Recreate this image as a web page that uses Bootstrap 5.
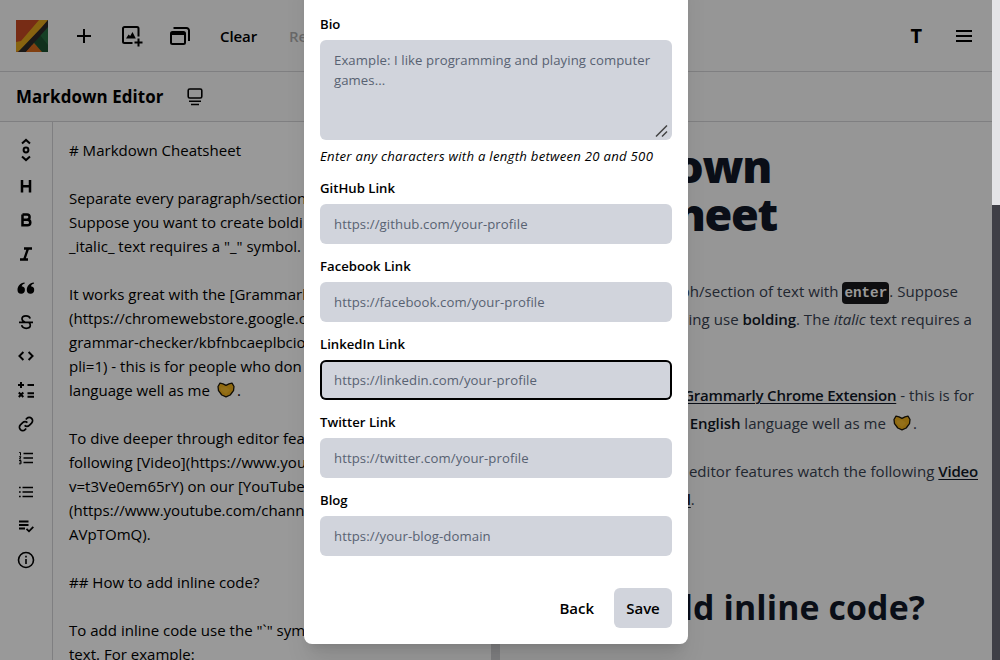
<!DOCTYPE html>
<html lang="en">
<head>
<meta charset="utf-8">
<meta name="viewport" content="width=device-width, initial-scale=1">
<title>Markdown Editor</title>
<link href="https://cdn.jsdelivr.net/npm/bootstrap@5.3.0/dist/css/bootstrap.min.css" rel="stylesheet">
<style>
  body{font-family:"Open Sans","Noto Sans",sans-serif;font-size:15.04px;line-height:24px;color:#000;background:#3f3f46;height:660px}
  svg{display:block;flex:none}
  .line-i{fill:none;stroke:#000;stroke-width:2}
  .app{width:992px;height:660px;background:#fafafa}
  .page-thumb{width:8px;height:205px;background:#e4e4e7}
  .top-bar{height:72px;border-bottom:1px solid #d4d4d8;padding:0 20px 0 16px}
  .sub-bar{height:50px;border-bottom:1px solid #d4d4d8;padding:0 16px}
  .doc-title{font-weight:700;font-size:16.92px;letter-spacing:.08px}
  .tool{font-weight:600;letter-spacing:-.1px}
  .faded{opacity:.3}
  .typo{font-weight:700;font-size:20px}
  .pane-l{width:500px;border-right:1px solid #d4d4d8;background:#fff}
  .side{width:53px;border-right:1px solid #d4d4d8;padding-top:11px}
  .side svg{margin-bottom:14px}
  .side svg:first-child{margin:5px 0 14px}
  .src{padding:16px;white-space:pre;line-height:24px}
  .src-bar{width:8px;background:#d4d4d8}
  .pair{display:inline-block;vertical-align:-2px;margin:0 2px 0 3px}
  .view{padding:20px 14px 0 16px;color:#374151;letter-spacing:.04px}
  .view div{text-align:right;white-space:nowrap;line-height:28px}
  .view b,.view a{font-weight:600;color:#111827;letter-spacing:-.12px}
  .view a{text-decoration:underline;text-underline-offset:2px;text-decoration-thickness:1px;letter-spacing:-.22px}
  .view .big{font-weight:800;font-size:45px;line-height:48px;letter-spacing:-1.3px;color:#111827}
  .view .mid{font-weight:700;font-size:33.84px;line-height:40px;letter-spacing:.12px;color:#111827;margin-top:74px}
  .w1{width:255px}.w2{width:261px}.w3{width:442px}.w4{width:456px}.w5{width:458px}.w6{width:401px}.w7{width:462px}.w8{width:177px}.w9{width:409px}.w10{width:160px}
  .key{font:700 14.3px/22px "Liberation Mono",monospace;background:#18181b;color:#fff;border-radius:4px;padding:0 2px;display:inline-block;letter-spacing:0}
  .shade{background:rgba(0,0,0,.4)}
  .sheet{left:304px;top:-40px;width:384px;height:684px;background:#fff;border-radius:8px;padding:52px 16px 16px;box-shadow:0 20px 25px -5px rgba(0,0,0,.1),0 8px 10px -6px rgba(0,0,0,.1)}
  .sheet label{font-weight:600;font-size:13.16px;line-height:24px;height:28px;display:block}
  .sheet .form-control{background:#d1d4dc;border:0;border-radius:6px;height:40px;padding:8px 14px;font-size:13.16px;line-height:20px;letter-spacing:.09px}
  .sheet .form-control::placeholder{color:#586272;opacity:1}
  .sheet textarea.form-control{height:100px;padding-top:10px;resize:none;letter-spacing:.08px}
  .sheet .active-field{box-shadow:inset 0 0 0 2px #000}
  .hint{font-size:13.16px;font-style:italic;letter-spacing:.26px;line-height:20px;margin:6px 0 10px;white-space:nowrap}
  .field{margin-bottom:10px}
  .grip{right:4px;bottom:3px}
  .sheet .btn{height:40px;padding:0 12px;font-weight:600;font-size:15.04px;border:0;border-radius:6px;letter-spacing:-.05px;color:#000}
  .sheet .btn-save{background:#d1d4dc;width:58px}
</style>
</head>
<body class="position-relative overflow-hidden">
<svg width="0" height="0" class="position-absolute"><defs>
  <g id="heart"><path d="M1 4.500 3 1.200l3 .6L9 3.300l3-1.500 3-.6 2 3.300-.5 4.200-3.300 4.300L9 14.800 4.800 13 1.500 8.700Z" fill="#efb01c" stroke="#1c1608" stroke-width="1.300" stroke-linejoin="round"/><path d="M3.500 5.500 9 5l4 3-4 4-5-3.500Z" fill="#f7bb2a"/></g>
</defs></svg>

<div class="d-flex">
  <div class="app d-flex flex-column overflow-hidden">
    <header class="top-bar d-flex align-items-center flex-shrink-0">
      <svg width="32" height="32" viewBox="0 0 32 32"><path fill="#c64a23" d="M0 0h32v32H0z"/><path fill="#266b3e" d="M32 0v32h-9L15 24z"/><path fill="#1c5030" d="M32 32V25L24 15l-6 7 7 10z"/><path fill="#e2a51c" d="M23 0h9L6 30 0 32V22l5-1z"/><path fill="#2c2927" d="M32 0v7L10 32H2L26 7z"/><path fill="#d76a1c" d="m18 23 8 9H10z"/></svg>
      <svg class="line-i" style="margin-left:24px" width="24" height="24" viewBox="0 0 24 24"><path d="M12 5v14M5 12h14"/></svg>
      <svg class="line-i" style="margin-left:24px" width="24" height="24" viewBox="0 0 24 24"><path d="M12.500 19H4.500a1.500 1.500 0 0 1-1.500-1.500v-13A1.500 1.500 0 0 1 4.500 3h12.500a1.500 1.500 0 0 1 1.500 1.500v8M18.500 14.500v8M14.500 18.500h8" /><path fill="#000" stroke="none" d="m6 14.500 2.600-4 1.600 1.500L12.500 8l3.300 6.500z"/></svg>
      <svg class="line-i" style="margin-left:24px" width="24" height="24" viewBox="0 0 24 24"><rect x="3" y="8" width="14" height="12" rx="1.500"/><path d="M3 8h14v3H3z" fill="#000" stroke="none"/><path d="M5.500 4h13A2.500 2.500 0 0 1 21 6.500V17"/></svg>
      <span class="tool" style="margin-left:28px">Clear</span>
      <span class="tool faded" style="margin-left:32px">Re</span>
      <span class="typo ms-auto">T</span>
      <svg class="line-i" style="margin-left:34px" width="16" height="16" viewBox="0 0 16 16"><path d="M0 3h16M0 8h16M0 13h16"/></svg>
    </header>
    <div class="sub-bar d-flex align-items-center flex-shrink-0">
      <span class="doc-title">Markdown Editor</span>
      <svg class="line-i" style="margin-left:24px;stroke-width:1.600" width="16" height="20" viewBox="0 0 16 20"><rect x="1.200" y="2" width="13.600" height="9" rx="1.500"/><path d="M2 14.200h12M4 17.500h8"/></svg>
    </div>
    <div class="d-flex flex-grow-1 overflow-hidden">
      <section class="pane-l d-flex flex-shrink-0">
        <nav class="side d-flex flex-column align-items-center flex-shrink-0">
          <svg class="line-i" width="20" height="24" viewBox="0 0 20 24"><circle cx="10" cy="12" r="2.400"/><path d="m6 5.500 4-3.600 4 3.600M6 18.500l4 3.600 4-3.600"/></svg>
          <svg class="line-i" style="stroke-width:2.500" width="20" height="20" viewBox="0 0 20 20"><path d="M6 4v12.500M14 4v12.500M6 10.200h8"/></svg>
          <svg class="line-i" style="stroke-width:2.500" width="20" height="20" viewBox="0 0 20 20"><path d="M6.500 4.500H11a2.600 2.600 0 0 1 0 5.200H6.500M6.500 9.700h5a2.800 2.800 0 0 1 0 5.600h-5V4.500"/></svg>
          <svg class="line-i" style="stroke-width:2.300" width="20" height="20" viewBox="0 0 20 20"><path d="M8 4.500h8M4 15.500h8M12 4.500 8.200 15.500"/></svg>
          <svg width="20" height="20" viewBox="0 0 20 20"><path d="M8.500 4.500C4.200 5 1.500 8 1.500 12a3.700 3.700 0 1 0 4.100-3.700C6 7 7 6 8.800 5.500zM17.800 4.500c-4.300.5-7 3.500-7 7.500a3.700 3.700 0 1 0 4.100-3.700c.4-1.300 1.400-2.300 3.200-2.800z"/></svg>
          <svg class="line-i" style="stroke-width:1.700" width="20" height="20" viewBox="0 0 20 20"><path d="M3 10.300h14M14.200 6.500C13.600 4.700 12 3.800 10 3.800c-2.300 0-4 1.200-4 3 0 1.500 1 2.600 3 3.200M5.700 13.200c.4 2 2 3.100 4.500 3.100 2.400 0 4.100-1.200 4.100-3 0-1.200-.4-2-1.200-2.600"/></svg>
          <svg class="line-i" style="stroke-width:1.900" width="20" height="20" viewBox="0 0 20 20"><path d="M7.400 6 3.400 10l4 4M12.600 6l4 4-4 4"/></svg>
          <svg class="line-i" width="20" height="20" viewBox="0 0 20 20"><path d="M2 5h6M5 2v6M11.500 5H18M2.800 12.500l4.500 4.500M7.300 12.500l-4.500 4.500M11.500 13.200H18M11.500 16.800H18"/></svg>
          <svg class="line-i" style="stroke-width:1.700" width="20" height="20" viewBox="0 0 20 20"><path d="M8.600 11.400a3.300 3.300 0 0 0 4.700 0l2.300-2.300a3.300 3.300 0 0 0-4.700-4.700L9.800 5.500M11.400 8.600a3.300 3.300 0 0 0-4.700 0l-2.300 2.300a3.300 3.300 0 0 0 4.700 4.700l1.100-1.100"/></svg>
          <svg class="line-i" style="stroke-width:1.700" width="20" height="20" viewBox="0 0 20 20"><path d="M7.500 5.500H17M7.500 10H17M7.500 14.500H17"/><path stroke-width="1" d="M3.200 4.500h1.300v3M3 8.800h2L3.500 11H5M3 12.500h2v3.300H3M3.500 14H5"/></svg>
          <svg class="line-i" style="stroke-width:1.700" width="20" height="20" viewBox="0 0 20 20"><path d="M6.500 5.500H17M6.500 10H17M6.500 14.500H17M3 5.500h1.700M3 10h1.700M3 14.500h1.700"/></svg>
          <svg class="line-i" style="stroke-width:1.800" width="20" height="20" viewBox="0 0 20 20"><path d="M3 5.500h9.500M3 9h9.500M3 12.500h6M10.500 12.800l2.500 2.500 4.300-4.500"/></svg>
          <svg class="line-i" style="stroke-width:1.600" width="20" height="20" viewBox="0 0 20 20"><circle cx="10" cy="10" r="7.500"/><path d="M10 9v5M10 5.800v1.700"/></svg>
        </nav>
        <div class="src flex-grow-1 overflow-hidden"># Markdown Cheatsheet

Separate every paragraph/section
Suppose you want to create boldi
_italic_ text requires a "_" symbol.

It works great with the [Grammarl
(https://chromewebstore.google.c
grammar-checker/kbfnbcaeplbcio
pli=1) - this is for people who don
language well as me <svg class="pair" width="18" height="16"><use href="#heart"/></svg>.

To dive deeper through editor feat
following [Video](https://www.you
v=t3Ve0em65rY) on our [YouTube
(https://www.youtube.com/chann
AVpTOmQ).

## How to add inline code?

To add inline code use the "`" sym
text. For example:</div>
        <div class="src-bar flex-shrink-0"></div>
      </section>
      <article class="view flex-grow-1">
        <div class="big w1">Markdown</div>
        <div class="big w2">Cheatsheet</div>
        <div class="w3" style="margin-top:39px">Separate every paragraph/section of text with <span class="key">enter</span>. Suppose</div>
        <div class="w4">you want to create bolding use <b>bolding</b>. The <i>italic</i> text requires a</div>
        <div class="w10">"_" symbol.</div>
        <div class="w5" style="margin-top:20px">It works great with the <a href="#">Grammarly Chrome Extension</a> - this is for</div>
        <div class="w6">people who don't know <b>English</b> language well as me <svg class="pair" width="18" height="16"><use href="#heart"/></svg>.</div>
        <div class="w7" style="margin-top:20px">To dive deeper through editor features watch the following <a href="#">Video</a></div>
        <div class="w8">on our <a href="#">YouTube Channel</a>.</div>
        <div class="mid w9">How to add inline code?</div>
      </article>
    </div>
  </div>
  <div class="page-thumb"></div>
</div>

<div class="app shade position-absolute top-0 start-0"></div>
<form class="sheet position-absolute">
  <label>Bio</label>
  <div class="position-relative">
    <textarea class="form-control" placeholder="Example: I like programming and playing computer games..."></textarea>
    <svg class="grip position-absolute" width="13" height="12" viewBox="0 0 13 12" fill="none" stroke="#444" stroke-width="1.500"><path d="M1 11.500 12 .5M7 11.500l5-5"/></svg>
  </div>
  <p class="hint">Enter any characters with a length between 20 and 500</p>
  <div class="field"><label>GitHub Link</label><input class="form-control" placeholder="https://github.com/your-profile"></div>
  <div class="field"><label>Facebook Link</label><input class="form-control" placeholder="https://facebook.com/your-profile"></div>
  <div class="field"><label>LinkedIn Link</label><input class="form-control active-field" placeholder="https://linkedin.com/your-profile"></div>
  <div class="field"><label>Twitter Link</label><input class="form-control" placeholder="https://twitter.com/your-profile"></div>
  <div><label>Blog</label><input class="form-control" placeholder="https://your-blog-domain"></div>
  <div class="d-flex justify-content-end gap-2 mt-4 pt-2"><button type="button" class="btn">Back</button><button type="button" class="btn btn-save">Save</button></div>
</form>
<script src="https://cdn.jsdelivr.net/npm/bootstrap@5.3.0/dist/js/bootstrap.bundle.min.js"></script>
</body>
</html>
